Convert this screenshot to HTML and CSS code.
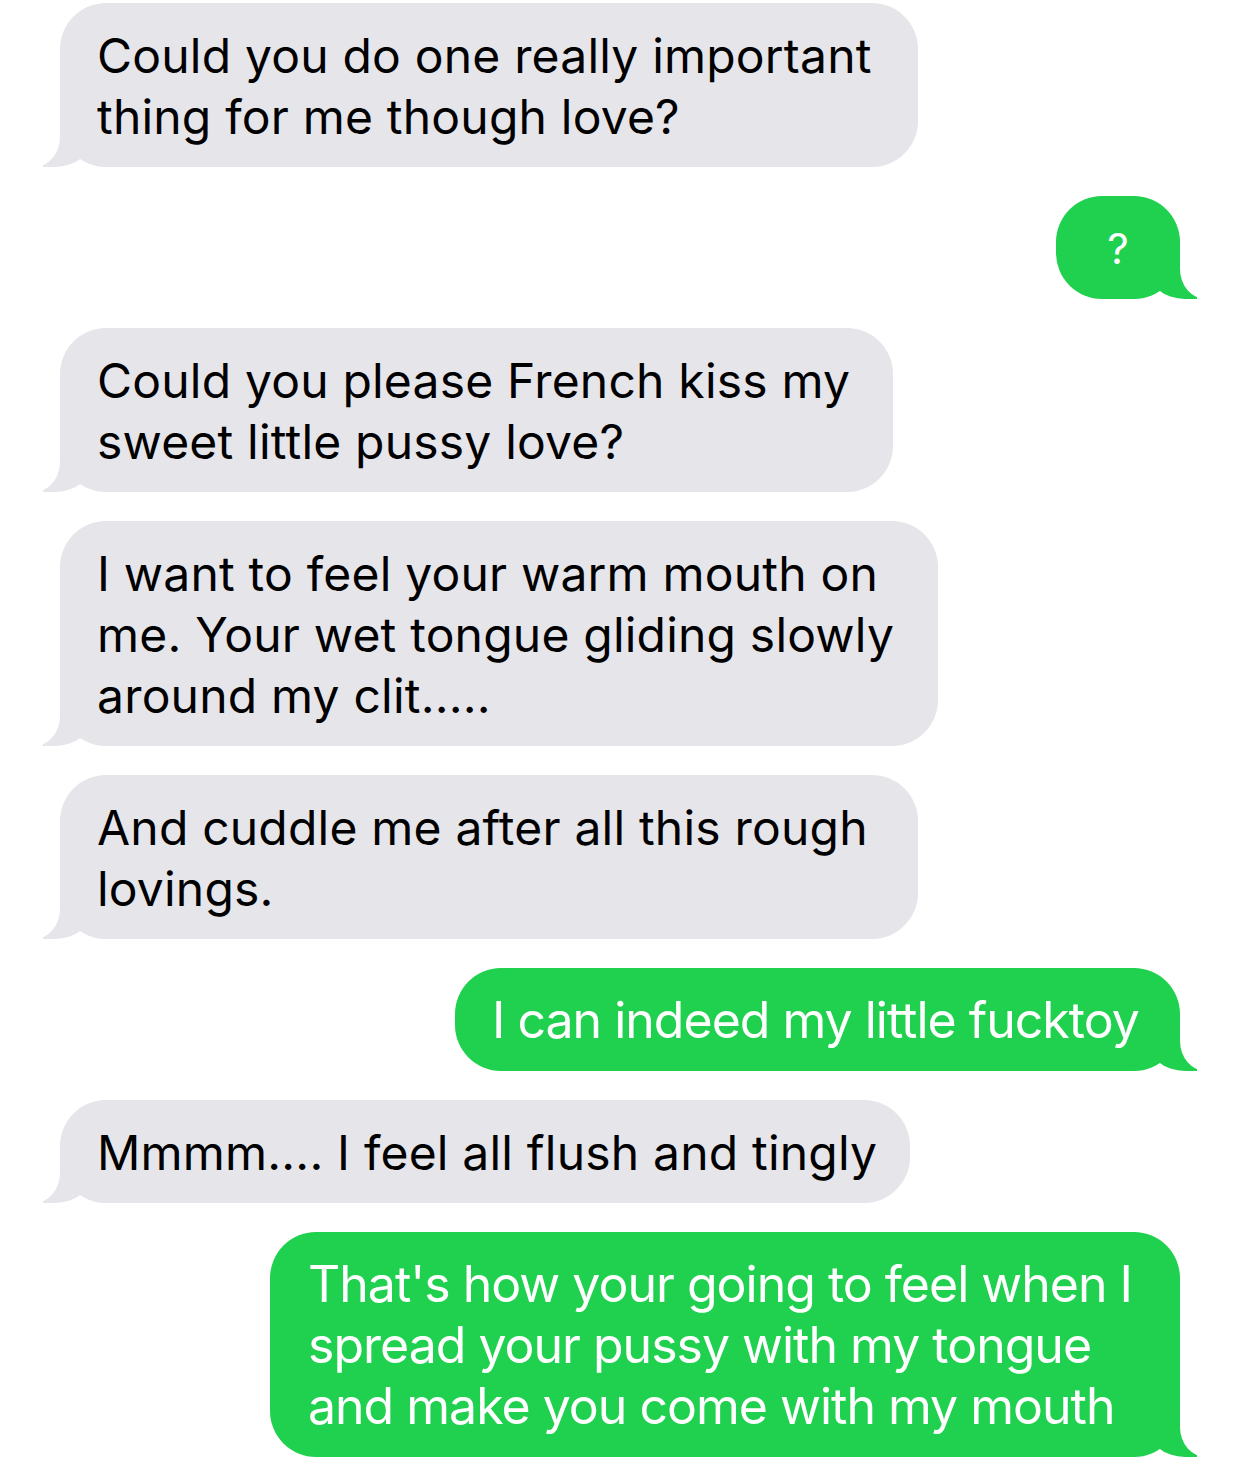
FILE: index.html
```html
<!DOCTYPE html>
<html>
<head>
<meta charset="utf-8">
<link rel="stylesheet" href="styles.css">
</head>
<body>
<div class="chat">
  <div class="row in"><div class="bubble gray w1">Could you do one really important<br>thing for me though love?</div></div>
  <div class="row out"><div class="bubble green q">?</div></div>
  <div class="row in"><div class="bubble gray w3">Could you please French kiss my<br>sweet little pussy love?</div></div>
  <div class="row in"><div class="bubble gray w4">I want to feel your warm mouth on<br>me. Your wet tongue gliding slowly<br>around my clit.....</div></div>
  <div class="row in"><div class="bubble gray w5">And cuddle me after all this rough<br>lovings.</div></div>
  <div class="row out"><div class="bubble green w6">I can indeed my little fucktoy</div></div>
  <div class="row in"><div class="bubble gray w7">Mmmm.... I feel all flush and tingly</div></div>
  <div class="row out"><div class="bubble green w8">That's how your going to feel when I<br>spread your pussy with my tongue<br>and make you come with my mouth</div></div>
</div>
</body>
</html>
```
FILE: styles.css
```css
html, body {
  margin: 0;
  padding: 0;
  background: #ffffff;
}
.chat {
  display: flex;
  flex-direction: column;
  gap: 29px;
  padding: 3px 62px 0 60px;
  font-family: Inter, "Liberation Sans", Arial, sans-serif;
}
.row {
  display: flex;
}
.row.in { justify-content: flex-start; }
.row.out { justify-content: flex-end; }
.bubble {
  position: relative;
  box-sizing: border-box;
  padding: 22px 37px 20px 37px;
  border-radius: 46px;
  font-size: 48px;
  line-height: 61px;
  letter-spacing: 0.2px;
  white-space: nowrap;
}
.gray {
  background: #e5e5ea;
  color: #000;
}
.green {
  background: #20d04f;
  color: #fff;
  font-size: 50px;
  letter-spacing: -1px;
}
.gray::before {
  content: "";
  position: absolute;
  left: -17px;
  bottom: 0;
  width: 50px;
  height: 44px;
  background: #e5e5ea;
  border-bottom-right-radius: 38px 32px;
}
.gray::after {
  content: "";
  position: absolute;
  left: -50px;
  bottom: 0;
  width: 50px;
  height: 44px;
  background: #fff;
  border-bottom-right-radius: 26px 30px;
}
.green::before {
  content: "";
  position: absolute;
  right: -17px;
  bottom: 0;
  width: 50px;
  height: 44px;
  background: #20d04f;
  border-bottom-left-radius: 38px 32px;
}
.green::after {
  content: "";
  position: absolute;
  right: -50px;
  bottom: 0;
  width: 50px;
  height: 44px;
  background: #fff;
  border-bottom-left-radius: 26px 30px;
}
.w1 { width: 858px; }
.w3 { width: 833px; }
.w4 { width: 878px; }
.w5 { width: 858px; }
.w7 { width: 850px; }
.q {
  width: 124px;
  padding-left: 0;
  padding-right: 0;
  text-align: center;
  font-size: 42px;
  letter-spacing: 0;
}
.w6 { width: 725px; }
.w8 { width: 910px; padding-left: 38px; }
```
